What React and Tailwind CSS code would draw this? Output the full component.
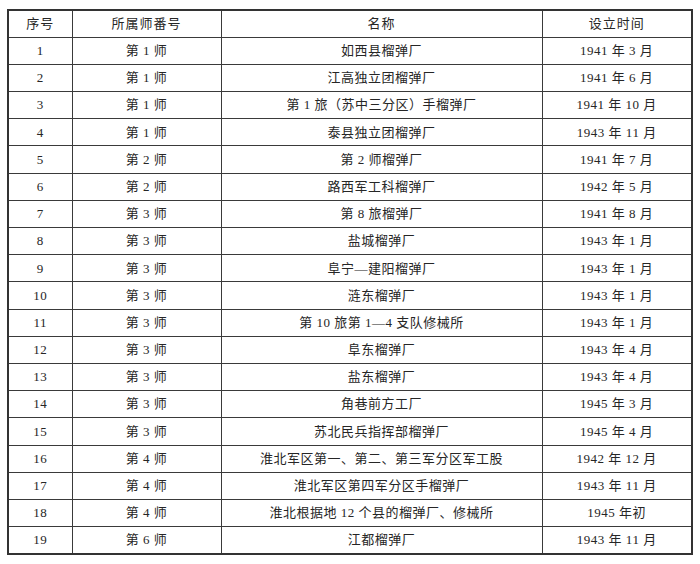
const rows = [
  ['1', '第 1 师', '如西县榴弹厂', '1941 年 3 月'],
  ['2', '第 1 师', '江高独立团榴弹厂', '1941 年 6 月'],
  ['3', '第 1 师', '第 1 旅（苏中三分区）手榴弹厂', '1941 年 10 月'],
  ['4', '第 1 师', '泰县独立团榴弹厂', '1943 年 11 月'],
  ['5', '第 2 师', '第 2 师榴弹厂', '1941 年 7 月'],
  ['6', '第 2 师', '路西军工科榴弹厂', '1942 年 5 月'],
  ['7', '第 3 师', '第 8 旅榴弹厂', '1941 年 8 月'],
  ['8', '第 3 师', '盐城榴弹厂', '1943 年 1 月'],
  ['9', '第 3 师', '阜宁—建阳榴弹厂', '1943 年 1 月'],
  ['10', '第 3 师', '涟东榴弹厂', '1943 年 1 月'],
  ['11', '第 3 师', '第 10 旅第 1—4 支队修械所', '1943 年 1 月'],
  ['12', '第 3 师', '阜东榴弹厂', '1943 年 4 月'],
  ['13', '第 3 师', '盐东榴弹厂', '1943 年 4 月'],
  ['14', '第 3 师', '角巷前方工厂', '1945 年 3 月'],
  ['15', '第 3 师', '苏北民兵指挥部榴弹厂', '1945 年 4 月'],
  ['16', '第 4 师', '淮北军区第一、第二、第三军分区军工股', '1942 年 12 月'],
  ['17', '第 4 师', '淮北军区第四军分区手榴弹厂', '1943 年 11 月'],
  ['18', '第 4 师', '淮北根据地 12 个县的榴弹厂、修械所', '1945 年初'],
  ['19', '第 6 师', '江都榴弹厂', '1943 年 11 月'],
];

const cell = 'border border-[#3a3a3a] text-center align-middle p-0';

export default function App() {
  return (
    <div
      className="w-[700px] h-[564px] bg-white pt-[9px] pl-[7px] text-[#262626] text-[13px] tracking-[0.5px]"
      style={{ fontFamily: '"Liberation Serif", "Noto Sans CJK SC", serif' }}
    >
      <table className="table-fixed border-collapse w-[684px] border-2 border-[#333]">
        <colgroup>
          <col className="w-[64px]" />
          <col className="w-[149px]" />
          <col className="w-[321px]" />
          <col className="w-[150px]" />
        </colgroup>
        <thead>
          <tr className="h-[27.2px]">
            <th className={`${cell} font-normal tracking-[1px]`}>序号</th>
            <th className={`${cell} font-normal tracking-[1px]`}>所属师番号</th>
            <th className={`${cell} font-normal tracking-[1px]`}>名称</th>
            <th className={`${cell} font-normal tracking-[1px]`}>设立时间</th>
          </tr>
        </thead>
        <tbody>
          {rows.map((r) => (
            <tr key={r[0]} className="h-[27.2px]">
              {r.map((v, i) => (
                <td key={i} className={cell}>{v}</td>
              ))}
            </tr>
          ))}
        </tbody>
      </table>
    </div>
  );
}
